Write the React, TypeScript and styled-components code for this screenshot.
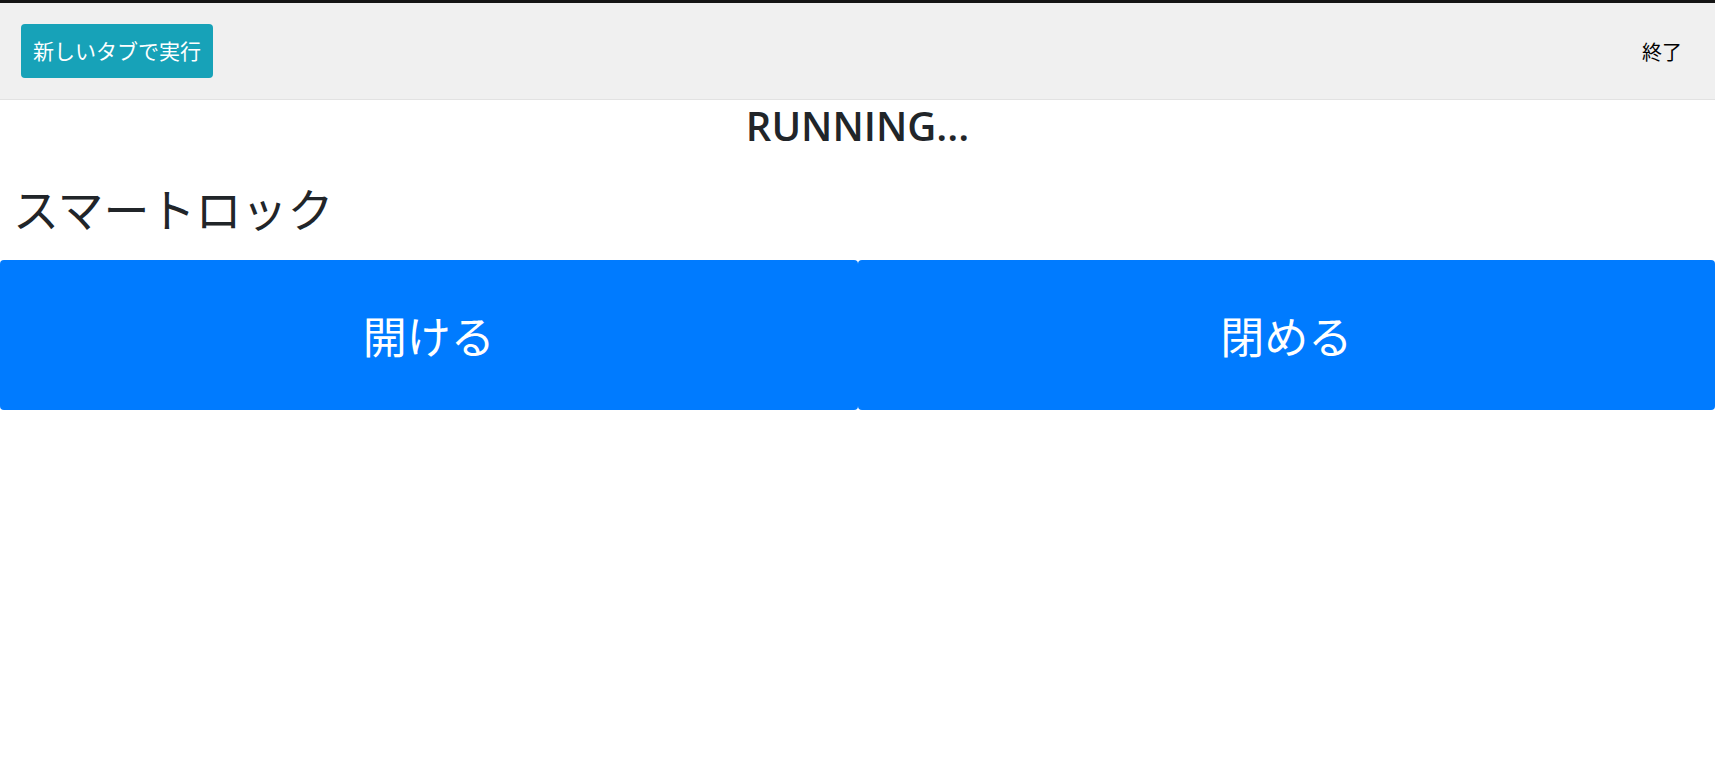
import React from "react";
import styled, { createGlobalStyle } from "styled-components";

const GlobalStyle = createGlobalStyle`
  html, body { margin: 0; padding: 0; background: #ffffff; }
  body {
    font-family: "Open Sans", "Noto Sans CJK JP", sans-serif;
    color: #212529;
  }
  * { box-sizing: border-box; }
`;

const Page = styled.div`
  display: flex;
  flex-direction: column;
  min-height: 779px;
  background: #ffffff;
`;

const TopStrip = styled.div`
  height: 3px;
  background: #141414;
`;

const Toolbar = styled.header`
  display: flex;
  align-items: center;
  justify-content: space-between;
  height: 97px;
  padding: 0 33px 0 21px;
  background: #f0f0f0;
  border-bottom: 1px solid #e2e2e2;
`;

const RunButton = styled.button`
  font-family: "Open Sans", "Noto Sans CJK JP", sans-serif;
  font-size: 21px;
  line-height: 30px;
  color: #ffffff;
  background: #17a2b8;
  border: none;
  border-radius: 4px;
  padding: 12px 12px;
  cursor: pointer;
`;

const ExitLink = styled.span`
  font-family: "Open Sans", "Noto Sans CJK JP", sans-serif;
  font-size: 20px;
  color: #000000;
  cursor: pointer;
`;

const Status = styled.h1`
  margin: 2px 0 0;
  text-align: center;
  font-size: 40px;
  line-height: 48px;
  font-weight: 600;
  color: #212529;
`;

const Title = styled.h2`
  margin: 27px 0 0 13px;
  font-family: "Noto Sans CJK JP", sans-serif;
  font-size: 46px;
  line-height: 60px;
  font-weight: 400;
  color: #212529;
`;

const ButtonRow = styled.div`
  display: flex;
  margin-top: 23px;
`;

const ActionButton = styled.button`
  flex: 1;
  height: 150px;
  font-family: "Noto Sans CJK JP", sans-serif;
  font-size: 44px;
  color: #ffffff;
  background: #007bff;
  border: none;
  border-radius: 4px;
  cursor: pointer;
`;

export default function App() {
  return (
    <>
      <GlobalStyle />
      <Page>
        <TopStrip />
        <Toolbar>
          <RunButton>新しいタブで実行</RunButton>
          <ExitLink>終了</ExitLink>
        </Toolbar>
        <Status>RUNNING...</Status>
        <Title>スマートロック</Title>
        <ButtonRow>
          <ActionButton>開ける</ActionButton>
          <ActionButton>閉める</ActionButton>
        </ButtonRow>
      </Page>
    </>
  );
}
